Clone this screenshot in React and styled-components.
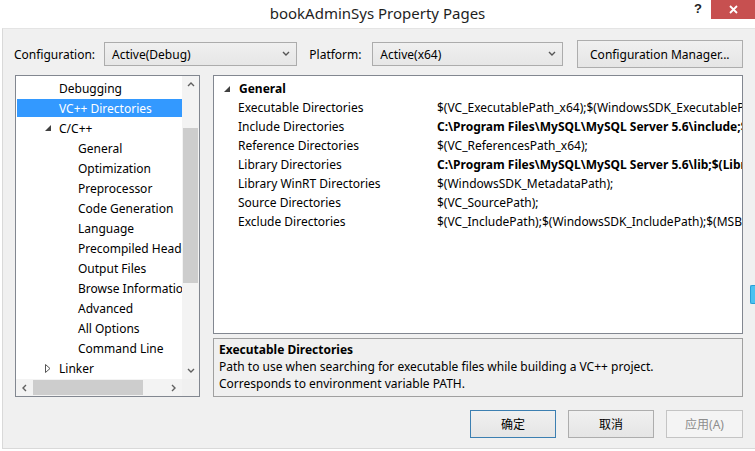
import React from 'react';
import styled, { createGlobalStyle } from 'styled-components';

const GlobalStyle = createGlobalStyle`
	html, body {
		margin: 0;
		padding: 0;
		background: #ffffff;
	}
	body {
		font-family: "Noto Sans", "Noto Sans CJK SC", sans-serif;
		font-size: 12px;
		color: #000000;
	}
`;

const Window = styled.div`
	position: relative;
	width: 755px;
	height: 451px;
	display: flex;
	flex-direction: column;
	overflow: hidden;
	background: #ffffff;
`;

const TitleBar = styled.div`
	height: 28px;
	display: grid;
	grid-template-columns: 1fr auto 1fr;
	align-items: start;
`;

const Title = styled.div`
	grid-column: 2;
	font-size: 15px;
	line-height: 27px;
	color: #1e1e1e;
`;

const Controls = styled.div`
	grid-column: 3;
	justify-self: end;
	display: flex;
	align-items: flex-start;
`;

const Help = styled.span`
	font-family: "Liberation Sans", sans-serif;
	font-weight: bold;
	font-size: 13px;
	line-height: 17px;
	margin-right: 9px;
	color: #222;
`;

const Close = styled.div`
	width: 44px;
	height: 19px;
	background: #c75050;
	display: flex;
	align-items: center;
	justify-content: center;
`;

const Body = styled.div`
	flex: 1;
	margin: 0 0 2px 2px;
	background: #f0f0f0;
	border-top: 1px solid #e4e4e4;
	border-left: 1px solid #d9d9d9;
	border-bottom: 1px solid #d9d9d9;
	padding: 11px 12px 0 11px;
	display: flex;
	flex-direction: column;
`;

const TopBar = styled.div`
	display: flex;
	align-items: center;
	height: 28px;
`;

const Label = styled.span`
	width: ${p => p.$width}px;
	margin-left: ${p => p.$offset || 0}px;
	flex-shrink: 0;
	white-space: nowrap;
`;

const Combo = styled.div`
	width: ${p => p.$width}px;
	height: 24px;
	box-sizing: border-box;
	border: 1px solid #acacac;
	background: linear-gradient(#f0f0f0, #e6e6e6);
	display: flex;
	align-items: center;
	justify-content: space-between;
	padding: 0 6px 0 7px;
`;

const Button = styled.div`
	width: ${p => p.$width}px;
	height: ${p => p.$height || 28}px;
	margin-left: ${p => p.$offset || 0}px;
	box-sizing: border-box;
	border: 1px solid ${p => (p.$primary ? '#3c7fb1' : p.$disabled ? '#c4c4c4' : '#adadad')};
	background: ${p => (p.$disabled ? '#f4f4f4' : 'linear-gradient(#f0f0f0, #e5e5e5)')};
	color: ${p => (p.$disabled ? '#8d8d8d' : '#000')};
	display: flex;
	align-items: center;
	justify-content: center;
	white-space: nowrap;
`;

const Main = styled.div`
	margin-top: 7px;
	margin-left: 1px;
	height: 322px;
	display: flex;
	gap: 13px;
`;

const Tree = styled.div`
	width: 185px;
	flex-shrink: 0;
	box-sizing: border-box;
	border: 1px solid #828790;
	background: #ffffff;
	display: grid;
	grid-template-columns: 1fr 17px;
	grid-template-rows: 1fr 17px;
`;

const TreeList = styled.div`
	padding-top: 2px;
	overflow: hidden;
`;

const TreeRow = styled.div`
	height: ${p => (p.$selected ? 18 : 20)}px;
	margin: ${p => (p.$selected ? '1px 0 1px 1px' : '0')};
	display: flex;
	align-items: center;
	padding-left: ${p => (p.$selected ? p.$indent - 1 : p.$indent)}px;
	white-space: nowrap;
	background: ${p => (p.$selected ? '#3399ff' : 'transparent')};
	color: ${p => (p.$selected ? '#ffffff' : '#000000')};
`;

const Expander = styled.span`
	width: 14px;
	margin-left: -14px;
	display: inline-flex;
	align-items: center;
`;

const VScroll = styled.div`
	background: #f3f3f3;
	display: flex;
	flex-direction: column;
`;

const HScroll = styled.div`
	background: #f3f3f3;
	display: flex;
	align-items: stretch;
`;

const Corner = styled.div`
	background: #f0f0f0;
`;

const ArrowBox = styled.div`
	width: 17px;
	height: 17px;
	flex-shrink: 0;
	display: flex;
	align-items: center;
	justify-content: center;
`;

const Thumb = styled.div`
	background: #cdcdcd;
	${p => (p.$vertical
		? `margin: ${p.$start}px 1px 0; height: ${p.$size}px;`
		: `margin: 1px 0 1px ${p.$start}px; width: ${p.$size}px;`)}
`;

const Fill = styled.div`
	flex: 1;
`;

const RightColumn = styled.div`
	flex: 1;
	display: flex;
	flex-direction: column;
	gap: 4px;
`;

const Grid = styled.div`
	height: 259px;
	box-sizing: border-box;
	border: 1px solid #828790;
	background: #ffffff;
	padding-top: 3px;
	overflow: hidden;
`;

const GridRow = styled.div`
	display: grid;
	grid-template-columns: 219px 1fr;
	height: 19px;
	align-items: center;
	white-space: nowrap;
`;

const Category = styled.div`
	display: flex;
	align-items: center;
	height: 19px;
	font-weight: bold;
	padding-left: 10px;
	gap: 9px;
`;

const NameCell = styled.div`
	padding-left: 24px;
	overflow: hidden;
`;

const ValueCell = styled.div`
	padding-left: 4px;
	overflow: hidden;
	font-weight: ${p => (p.$bold ? 'bold' : 'normal')};
`;

const Description = styled.div`
	flex: 1;
	box-sizing: border-box;
	border: 1px solid #a0a0a0;
	background: #f0f0f0;
	padding: 2px 5px;
	line-height: 17px;
`;

const DescTitle = styled.div`
	font-weight: bold;
`;

const Footer = styled.div`
	margin-top: 13px;
	display: flex;
	justify-content: flex-end;
	gap: 12px;
`;

const EdgeMark = styled.div`
	position: absolute;
	right: 0;
	top: 285px;
	width: 4px;
	height: 17px;
	border-radius: 2px 0 0 2px;
	background: #4cc2f1;
	border: 1px solid #2a9fd6;
	border-right: none;
`;

const Chevron = ({ dir, color = '#606060' }) => {
	const d = {
		up: 'M1 5 L4 2 L7 5',
		down: 'M1 2 L4 5 L7 2',
		left: 'M5 1 L2 4 L5 7',
		right: 'M2 1 L5 4 L2 7',
	}[dir];
	return (
		<svg width="8" height="8" viewBox="0 0 8 8">
			<path d={d} fill="none" stroke={color} strokeWidth="1.4" />
		</svg>
	);
};

const ExpandedGlyph = () => (
	<svg width="6" height="6" viewBox="0 0 6 6">
		<path d="M6 0 L6 6 L0 6 Z" fill="#404040" />
	</svg>
);

const CollapsedGlyph = () => (
	<svg width="6" height="9" viewBox="0 0 6 9">
		<path d="M0.5 0.5 L5 4.5 L0.5 8.5 Z" fill="none" stroke="#555" strokeWidth="1" />
	</svg>
);

const treeItems = [
	{ label: 'Debugging', indent: 43 },
	{ label: 'VC++ Directories', indent: 43, selected: true },
	{ label: 'C/C++', indent: 43, expander: 'open' },
	{ label: 'General', indent: 62 },
	{ label: 'Optimization', indent: 62 },
	{ label: 'Preprocessor', indent: 62 },
	{ label: 'Code Generation', indent: 62 },
	{ label: 'Language', indent: 62 },
	{ label: 'Precompiled Headers', indent: 62 },
	{ label: 'Output Files', indent: 62 },
	{ label: 'Browse Information', indent: 62 },
	{ label: 'Advanced', indent: 62 },
	{ label: 'All Options', indent: 62 },
	{ label: 'Command Line', indent: 62 },
	{ label: 'Linker', indent: 43, expander: 'closed' },
];

const properties = [
	{ name: 'Executable Directories', value: '$(VC_ExecutablePath_x64);$(WindowsSDK_ExecutablePath);$(VS_ExecutablePath);$(MSBuild_ExecutablePath);' },
	{ name: 'Include Directories', value: 'C:\\Program Files\\MySQL\\MySQL Server 5.6\\include;$(IncludePath)', bold: true },
	{ name: 'Reference Directories', value: '$(VC_ReferencesPath_x64);' },
	{ name: 'Library Directories', value: 'C:\\Program Files\\MySQL\\MySQL Server 5.6\\lib;$(LibraryPath)', bold: true },
	{ name: 'Library WinRT Directories', value: '$(WindowsSDK_MetadataPath);' },
	{ name: 'Source Directories', value: '$(VC_SourcePath);' },
	{ name: 'Exclude Directories', value: '$(VC_IncludePath);$(WindowsSDK_IncludePath);$(MSBuild_ExecutablePath);$(VC_LibraryPath_x64);' },
];

export default function App() {
	return (
		<Window>
			<GlobalStyle />
			<TitleBar>
				<Title>bookAdminSys Property Pages</Title>
				<Controls>
					<Help>?</Help>
					<Close>
						<svg width="9" height="9" viewBox="0 0 9 9">
							<path d="M1 1 L8 8 M8 1 L1 8" stroke="#ffffff" strokeWidth="1.8" />
						</svg>
					</Close>
				</Controls>
			</TitleBar>

			<Body>
				<TopBar>
					<Label $width={90}>Configuration:</Label>
					<Combo $width={194}>
						<span>Active(Debug)</span>
						<Chevron dir="down" color="#555" />
					</Combo>
					<Label $width={63} $offset={12}>Platform:</Label>
					<Combo $width={191}>
						<span>Active(x64)</span>
						<Chevron dir="down" color="#555" />
					</Combo>
					<Button $width={167} $offset={14}>Configuration Manager...</Button>
				</TopBar>

				<Main>
					<Tree>
						<TreeList>
							{treeItems.map(item => (
								<TreeRow key={item.label} $indent={item.indent} $selected={item.selected}>
									{item.expander && (
										<Expander>
											{item.expander === 'open' ? <ExpandedGlyph /> : <CollapsedGlyph />}
										</Expander>
									)}
									{item.label}
								</TreeRow>
							))}
						</TreeList>
						<VScroll>
							<ArrowBox><Chevron dir="up" /></ArrowBox>
							<Thumb $vertical $start={35} $size={155} />
							<Fill />
							<ArrowBox><Chevron dir="down" /></ArrowBox>
						</VScroll>
						<HScroll>
							<ArrowBox><Chevron dir="left" /></ArrowBox>
							<Thumb $start={0} $size={110} />
							<Fill />
							<ArrowBox><Chevron dir="right" /></ArrowBox>
						</HScroll>
						<Corner />
					</Tree>

					<RightColumn>
						<Grid>
							<Category>
								<ExpandedGlyph />
								<span>General</span>
							</Category>
							{properties.map(p => (
								<GridRow key={p.name}>
									<NameCell>{p.name}</NameCell>
									<ValueCell $bold={p.bold}>{p.value}</ValueCell>
								</GridRow>
							))}
						</Grid>
						<Description>
							<DescTitle>Executable Directories</DescTitle>
							<div>Path to use when searching for executable files while building a VC++ project.</div>
							<div>Corresponds to environment variable PATH.</div>
						</Description>
					</RightColumn>
				</Main>

				<Footer>
					<Button $width={86} $primary>确定</Button>
					<Button $width={86}>取消</Button>
					<Button $width={77} $disabled>应用(A)</Button>
				</Footer>
			</Body>
			<EdgeMark />
		</Window>
	);
}
